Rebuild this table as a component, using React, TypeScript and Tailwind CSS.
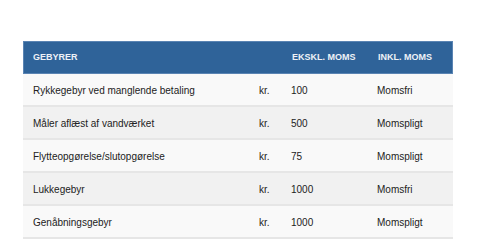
const rows = [
  { name: 'Rykkegebyr ved manglende betaling', amount: '100', vat: 'Momsfri' },
  { name: 'Måler aflæst af vandværket', amount: '500', vat: 'Momspligt' },
  { name: 'Flytteopgørelse/slutopgørelse', amount: '75', vat: 'Momspligt' },
  { name: 'Lukkegebyr', amount: '1000', vat: 'Momsfri' },
  { name: 'Genåbningsgebyr', amount: '1000', vat: 'Momspligt' },
]

export default function App() {
  return (
    <div className="w-[502px] h-[244px] bg-white pt-[41px] pl-[23px] font-['Liberation_Sans',Arial,sans-serif]">
      <div className="w-[430px]">
        <div className="grid grid-cols-[226px_32px_86px_1fr] h-[33px] items-center bg-[#2f6399] border border-[#5a84b3] text-[9px] font-bold text-[#eef2f7] uppercase">
          <div className="pl-[9px]">Gebyrer</div>
          <div className="pl-[10px]"></div>
          <div className="pl-[10px]">Ekskl. moms</div>
          <div className="pl-[10px]">Inkl. moms</div>
        </div>
        {rows.map((row, i) => (
          <div
            key={i}
            className={`grid grid-cols-[226px_32px_86px_1fr] h-[33px] items-center border-b-2 border-[#e6e6e6] text-[10px] text-[#222] ${
              i % 2 === 0 ? 'bg-[#f9f9f9]' : 'bg-[#f1f1f1]'
            }`}
          >
            <div className="pl-[10px] pt-px">{row.name}</div>
            <div className="pl-[10px] pt-px">kr.</div>
            <div className="pl-[10px] pt-px">{row.amount}</div>
            <div className="pl-[10px] pt-px">{row.vat}</div>
          </div>
        ))}
      </div>
    </div>
  )
}
